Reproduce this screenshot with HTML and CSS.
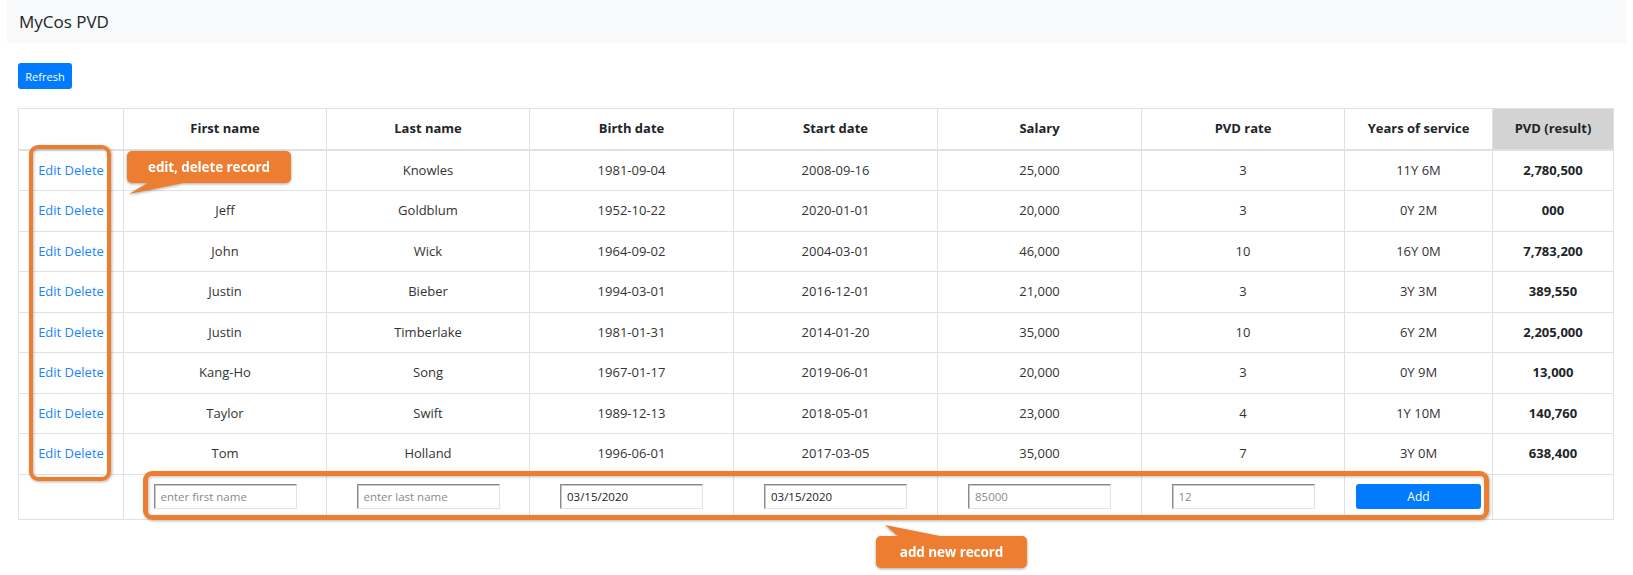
FILE: index.html
```html
<!DOCTYPE html>
<html lang="en">
<head>
<meta charset="utf-8">
<title>MyCos PVD</title>
<link rel="stylesheet" href="styles.css">
</head>
<body>
<div class="page">
  <nav class="navbar"><span class="brand">MyCos PVD</span></nav>
  <main class="content">
    <button class="btn btn-refresh">Refresh</button>
    <table class="grid">
      <colgroup>
        <col class="c-act"><col class="c-w"><col class="c-w"><col class="c-w2"><col class="c-w2"><col class="c-w2"><col class="c-w"><col class="c-yos"><col class="c-pvd">
      </colgroup>
      <thead>
        <tr>
          <th></th><th>First name</th><th>Last name</th><th>Birth date</th><th>Start date</th><th>Salary</th><th>PVD rate</th><th>Years of service</th><th class="pvd-head">PVD (result)</th>
        </tr>
      </thead>
      <tbody>
        <tr><td><a class="lnk">Edit</a> <a class="lnk">Delete</a></td><td></td><td>Knowles</td><td>1981-09-04</td><td>2008-09-16</td><td>25,000</td><td>3</td><td>11Y 6M</td><td class="res">2,780,500</td></tr>
        <tr><td><a class="lnk">Edit</a> <a class="lnk">Delete</a></td><td>Jeff</td><td>Goldblum</td><td>1952-10-22</td><td>2020-01-01</td><td>20,000</td><td>3</td><td>0Y 2M</td><td class="res">000</td></tr>
        <tr><td><a class="lnk">Edit</a> <a class="lnk">Delete</a></td><td>John</td><td>Wick</td><td>1964-09-02</td><td>2004-03-01</td><td>46,000</td><td>10</td><td>16Y 0M</td><td class="res">7,783,200</td></tr>
        <tr><td><a class="lnk">Edit</a> <a class="lnk">Delete</a></td><td>Justin</td><td>Bieber</td><td>1994-03-01</td><td>2016-12-01</td><td>21,000</td><td>3</td><td>3Y 3M</td><td class="res">389,550</td></tr>
        <tr><td><a class="lnk">Edit</a> <a class="lnk">Delete</a></td><td>Justin</td><td>Timberlake</td><td>1981-01-31</td><td>2014-01-20</td><td>35,000</td><td>10</td><td>6Y 2M</td><td class="res">2,205,000</td></tr>
        <tr><td><a class="lnk">Edit</a> <a class="lnk">Delete</a></td><td>Kang-Ho</td><td>Song</td><td>1967-01-17</td><td>2019-06-01</td><td>20,000</td><td>3</td><td>0Y 9M</td><td class="res">13,000</td></tr>
        <tr><td><a class="lnk">Edit</a> <a class="lnk">Delete</a></td><td>Taylor</td><td>Swift</td><td>1989-12-13</td><td>2018-05-01</td><td>23,000</td><td>4</td><td>1Y 10M</td><td class="res">140,760</td></tr>
        <tr><td><a class="lnk">Edit</a> <a class="lnk">Delete</a></td><td>Tom</td><td>Holland</td><td>1996-06-01</td><td>2017-03-05</td><td>35,000</td><td>7</td><td>3Y 0M</td><td class="res">638,400</td></tr>
        <tr class="add-row">
          <td></td>
          <td><input class="fld" type="text" placeholder="enter first name"></td>
          <td><input class="fld" type="text" placeholder="enter last name"></td>
          <td><input class="fld" type="text" value="03/15/2020"></td>
          <td><input class="fld" type="text" value="03/15/2020"></td>
          <td><input class="fld" type="text" placeholder="85000"></td>
          <td><input class="fld" type="text" placeholder="12"></td>
          <td><button class="btn btn-add">Add</button></td>
          <td></td>
        </tr>
      </tbody>
    </table>
  </main>

  <div class="mark mark-left"></div>
  <div class="mark mark-bottom"></div>
  <div class="callout callout-edit"><span class="tail tail-down"></span><span class="callout-text">edit, delete record</span></div>
  <div class="callout callout-add"><span class="tail tail-up"></span><span class="callout-text">add new record</span></div>
</div>
</body>
</html>
```

FILE: styles.css
```css
* { box-sizing: border-box; }

html, body {
  margin: 0;
  padding: 0;
  background: #fff;
}

body {
  font-family: "Open Sans", "Noto Sans", Arial, sans-serif;
  color: #212529;
  font-size: 13px;
}

.page {
  position: relative;
  width: 1633px;
  height: 575px;
  overflow: hidden;
}

.navbar {
  margin: 0 7px;
  height: 43px;
  background: #f8f9fa;
  display: flex;
  align-items: center;
  padding-left: 12px;
}

.brand {
  font-size: 17px;
  color: #212529;
}

.content {
  padding: 20px 20px 0 18px;
}

.btn {
  font-family: inherit;
  border: none;
  background: #007bff;
  color: #fff;
  border-radius: 3px;
  cursor: pointer;
}

.btn-refresh {
  display: block;
  height: 26px;
  width: 54px;
  padding: 0;
  font-size: 11px;
}

.grid {
  margin-top: 19px;
  width: 1595px;
  table-layout: fixed;
  border-collapse: collapse;
  border: 1px solid #dee2e6;
}

.c-act { width: 105px; }
.c-w { width: 203px; }
.c-w2 { width: 204px; }
.c-yos { width: 148px; }
.c-pvd { width: 121px; }

.grid th,
.grid td {
  border: 1px solid #dee2e6;
  padding: 12px 4px;
  line-height: 15.5px;
  text-align: center;
  vertical-align: middle;
  font-size: 13px;
  white-space: nowrap;
}

.grid th {
  font-weight: 700;
  border-bottom-width: 2px;
}

.grid td {
  color: #333;
}

.pvd-head {
  background: #d3d3d3;
}

.grid td.res {
  font-weight: 700;
  color: #212529;
}

.lnk {
  color: #1a84ff;
  text-decoration: none;
  cursor: pointer;
}

.add-row td {
  padding: 9px 11px 10px 11px;
}

.fld {
  display: block;
  margin: 0 auto;
  width: 143px;
  height: 25px;
  font-family: inherit;
  font-size: 11.5px;
  color: #222;
  padding: 0 6px;
  border: 1px solid;
  border-color: #8a8a8a #e4e4e4 #e4e4e4 #8a8a8a;
  box-shadow: inset 1px 1px 0 #c8c8c8;
  outline: none;
  background: #fff;
}

.fld::placeholder {
  color: #8a8a8a;
}

.btn-add {
  display: block;
  width: 100%;
  height: 25px;
  font-size: 12px;
}

/* annotation overlays */
.mark {
  position: absolute;
  border: 4px solid #ed7d31;
  border-radius: 9px;
  box-shadow: 1px 1px 3px rgba(0,0,0,0.3), inset 1px 1px 3px rgba(0,0,0,0.25);
}

.mark-left {
  left: 29px;
  top: 145px;
  width: 82px;
  height: 336px;
}

.mark-bottom {
  left: 143px;
  top: 471px;
  width: 1346px;
  height: 49px;
  border-width: 5px;
}

.callout {
  position: absolute;
  height: 32px;
  background: #ed7d31;
  border-radius: 5px;
  display: flex;
  align-items: center;
  justify-content: center;
  filter: drop-shadow(0 1px 1.5px rgba(0,0,0,0.35));
}

.callout-text {
  position: relative;
  color: #fff;
  font-weight: 700;
  font-size: 13.5px;
  letter-spacing: -0.1px;
}

.callout-edit {
  left: 127px;
  top: 151px;
  width: 164px;
}

.callout-add {
  left: 876px;
  top: 536px;
  width: 151px;
}

.tail {
  position: absolute;
  background: #ed7d31;
  width: 70px;
}

.tail-down {
  left: 0;
  top: 30px;
  height: 14px;
  clip-path: polygon(24px 0, 66px 0, 2px 13px);
}

.tail-up {
  left: 0;
  top: -11px;
  height: 13px;
  clip-path: polygon(9px 0, 64px 11px, 64px 13px, 22px 13px, 22px 11px);
}
```
